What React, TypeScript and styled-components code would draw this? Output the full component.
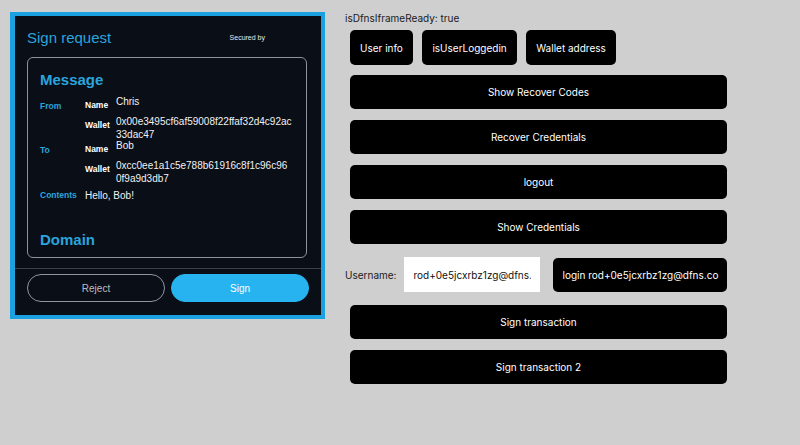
import React from "react";
import styled, { createGlobalStyle } from "styled-components";

const Global = createGlobalStyle`
  html, body { margin: 0; padding: 0; background: #cfcfcf; }
  body { font-family: Inter, "Liberation Sans", sans-serif; }
  * { box-sizing: border-box; }
`;

const Page = styled.div`
  display: flex;
  align-items: flex-start;
  padding: 12px 0 0 10px;
  width: 800px;
  height: 445px;
`;

const Frame = styled.div`
  width: 315px;
  height: 307px;
  border-style: solid;
  border-color: #1ba1df;
  border-width: 4px 4px 4px 5px;
  background: #0a0e16;
  display: flex;
  flex-direction: column;
  font-family: "Liberation Sans", Arial, sans-serif;
  color: #ffffff;
`;

const Header = styled.div`
  display: flex;
  align-items: center;
  justify-content: space-between;
  padding: 13px 56px 0 12px;
  height: 31px;
`;

const Title = styled.div`
  font-size: 15px;
  line-height: 18px;
  color: #2aa4dc;
`;

const Secured = styled.div`
  font-size: 7px;
  line-height: 10px;
  color: #e8e8e8;
`;

const MessageBox = styled.div`
  margin: 10px 14px 0 12px;
  height: 201px;
  border: 1px solid #8d939c;
  border-radius: 6px;
  padding: 13px 12px 0 12px;
  overflow: hidden;
`;

const Heading = styled.div<{ $gap?: number }>`
  font-size: 15px;
  font-weight: 700;
  line-height: 18px;
  color: #2aa4dc;
  margin-top: ${(p) => p.$gap ?? 0}px;
`;

const Section = styled.div<{ $gap: number }>`
  display: grid;
  grid-template-columns: 45px 1fr;
  align-items: start;
  margin-top: ${(p) => p.$gap}px;
`;

const SectionLabel = styled.div<{ $offset: number }>`
  font-size: 8.5px;
  font-weight: 700;
  line-height: 13px;
  color: #2aa4dc;
  padding-top: ${(p) => p.$offset}px;
`;

const Fields = styled.div`
  display: flex;
  flex-direction: column;
  gap: 7px;
`;

const Field = styled.div`
  display: grid;
  grid-template-columns: 31px 1fr;
  align-items: start;
`;

const Key = styled.div`
  font-size: 8.5px;
  font-weight: 700;
  line-height: 13px;
  padding-top: 3.5px;
  margin-bottom: -3.5px;
  color: #ffffff;
`;

const Value = styled.div`
  font-size: 10px;
  line-height: 13px;
  color: #f2f2f2;
`;

const Line = styled.span`
  display: block;
`;

const Divider = styled.div`
  margin-top: 10px;
  height: 1px;
  background: #3b4049;
`;

const Footer = styled.div`
  display: flex;
  gap: 6px;
  padding: 5px 12px 0 12px;
`;

const PillButton = styled.button<{ $primary?: boolean }>`
  width: 138px;
  height: 28px;
  border-radius: 14px;
  font-family: "Liberation Sans", Arial, sans-serif;
  font-size: 10px;
  cursor: pointer;
  border: 1px solid ${(p) => (p.$primary ? "#27b3ef" : "#9096a0")};
  background: ${(p) => (p.$primary ? "#27b3ef" : "transparent")};
  color: ${(p) => (p.$primary ? "#ffffff" : "#b9bdc3")};
`;

const Side = styled.div`
  margin-left: 20px;
  display: flex;
  flex-direction: column;
  gap: 11px;
`;

const Status = styled.div`
  font-size: 10px;
  line-height: 13px;
  color: #1a1a1a;
  margin-bottom: -6px;
`;

const Row = styled.div`
  display: flex;
  gap: 9.5px;
  padding-left: 5px;
  margin-bottom: -1px;
`;

const DarkButton = styled.button<{ $wide?: boolean }>`
  height: ${(p) => (p.$wide ? 34 : 35)}px;
  ${(p) => (p.$wide ? "width: 377px; margin-left: 5px;" : "padding: 0 10px;")}
  background: #000000;
  color: #ffffff;
  border: none;
  border-radius: 5px;
  font-family: Inter, "Liberation Sans", sans-serif;
  font-size: 10px;
  cursor: pointer;
  white-space: nowrap;
`;

const UserRow = styled.div`
  display: flex;
  align-items: center;
  height: 35px;
  margin: 2px 0 2px 0;
`;

const UserLabel = styled.span`
  font-size: 10px;
  color: #1a1a1a;
  margin-right: 8px;
`;

const UserInput = styled.input`
  width: 136px;
  height: 35px;
  border: none;
  outline: none;
  background: #ffffff;
  padding: 0 9px;
  font-family: Inter, "Liberation Sans", sans-serif;
  font-size: 10px;
  color: #111;
  margin-right: 13px;
`;

const LoginButton = styled(DarkButton)`
  width: 174px;
  padding: 0;
  height: 34px;
`;

export default function App() {
  return (
    <>
      <Global />
      <Page>
        <Frame>
          <Header>
            <Title>Sign request</Title>
            <Secured>Secured by</Secured>
          </Header>
          <MessageBox>
            <Heading>Message</Heading>
            <Section $gap={6}>
              <SectionLabel $offset={4.5}>From</SectionLabel>
              <Fields>
                <Field>
                  <Key>Name</Key>
                  <Value>Chris</Value>
                </Field>
                <Field>
                  <Key>Wallet</Key>
                  <Value>
                    <Line>0x00e3495cf6af59008f22ffaf32d4c92ac</Line>
                    <Line>33dac47</Line>
                  </Value>
                </Field>
              </Fields>
            </Section>
            <Section $gap={-2}>
              <SectionLabel $offset={4.5}>To</SectionLabel>
              <Fields>
                <Field>
                  <Key>Name</Key>
                  <Value>Bob</Value>
                </Field>
                <Field>
                  <Key>Wallet</Key>
                  <Value>
                    <Line>0xcc0ee1a1c5e788b61916c8f1c96c96</Line>
                    <Line>0f9a9d3db7</Line>
                  </Value>
                </Field>
              </Fields>
            </Section>
            <Section $gap={4}>
              <SectionLabel $offset={0}>Contents</SectionLabel>
              <Value>Hello, Bob!</Value>
            </Section>
            <Heading $gap={29}>Domain</Heading>
          </MessageBox>
          <Divider />
          <Footer>
            <PillButton>Reject</PillButton>
            <PillButton $primary>Sign</PillButton>
          </Footer>
        </Frame>
        <Side>
          <Status>isDfnsIframeReady: true</Status>
          <Row>
            <DarkButton>User info</DarkButton>
            <DarkButton>isUserLoggedin</DarkButton>
            <DarkButton>Wallet address</DarkButton>
          </Row>
          <DarkButton $wide>Show Recover Codes</DarkButton>
          <DarkButton $wide>Recover Credentials</DarkButton>
          <DarkButton $wide>logout</DarkButton>
          <DarkButton $wide>Show Credentials</DarkButton>
          <UserRow>
            <UserLabel>Username:</UserLabel>
            <UserInput readOnly value="rod+0e5jcxrbz1zg@dfns.co" />
            <LoginButton>login rod+0e5jcxrbz1zg@dfns.co</LoginButton>
          </UserRow>
          <DarkButton $wide>Sign transaction</DarkButton>
          <DarkButton $wide>Sign transaction 2</DarkButton>
        </Side>
      </Page>
    </>
  );
}
